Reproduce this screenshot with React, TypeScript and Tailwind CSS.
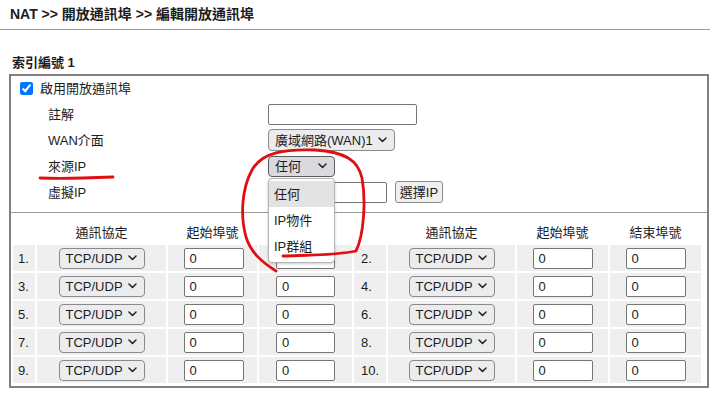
import React from 'react';

const Chevron: React.FC = () => (
  <svg width="9" height="6" viewBox="0 0 9 6" className="shrink-0">
    <path d="M1 1 L4.5 4.5 L8 1" fill="none" stroke="#222" strokeWidth="1.5" strokeLinecap="round" strokeLinejoin="round" />
  </svg>
);

interface SelectBoxProps {
  label: string;
  width: string;
  active?: boolean;
}

const SelectBox: React.FC<SelectBoxProps> = ({ label, width, active }) => (
  <div
    className={`${width} h-[21px] flex items-center justify-between pl-[6px] pr-[7px] rounded-[4px] border leading-[15px] ${
      active ? 'bg-[#d9d9de] border-[#5c5c5c]' : 'bg-[#ececef] border-[#8a8a8a]'
    }`}
  >
    <span className="whitespace-nowrap">{label}</span>
    <Chevron />
  </div>
);

const TextBox: React.FC<{ width: string; value?: string }> = ({ width, value }) => (
  <div className={`${width} h-[21px] bg-white border border-[#767676] rounded-[2px] pl-[5px] flex items-center leading-[15px]`}>
    {value}
  </div>
);

const PortRow: React.FC<{ left: number; right: number }> = ({ left, right }) => {
  const cell = 'bg-[#efefef] h-[26px] flex items-center';
  return (
    <>
      <div className={`${cell} pl-[5px]`}>{left}.</div>
      <div className={`${cell} justify-center`}><SelectBox label="TCP/UDP" width="w-[86px]" /></div>
      <div className={`${cell} justify-center pl-[2px]`}><TextBox width="w-[60px]" value="0" /></div>
      <div className={`${cell} justify-center`}><TextBox width="w-[59px]" value="0" /></div>
      <div className={`${cell} pl-[7px]`}>{right}.</div>
      <div className={`${cell} justify-center`}><SelectBox label="TCP/UDP" width="w-[86px]" /></div>
      <div className={`${cell} justify-center`}><TextBox width="w-[60px]" value="0" /></div>
      <div className={`${cell} justify-center`}><TextBox width="w-[60px]" value="0" /></div>
    </>
  );
};

const App: React.FC = () => {
  const rows = [
    [1, 2],
    [3, 4],
    [5, 6],
    [7, 8],
    [9, 10],
  ];
  const formLabel = 'w-[257px] pl-[37px] shrink-0';

  return (
    <div className="relative w-[721px] h-[403px] overflow-hidden bg-white text-[13px] text-[#1c1c1c] font-['Liberation_Sans','Noto_Sans_CJK_TC',sans-serif]">
      <div className="h-[30px] mr-[11px] border-b border-[#9a9a9a] pl-[10px] pt-[6px] font-bold text-[14px] leading-[16px]">
        NAT &gt;&gt; 開放通訊埠 &gt;&gt; 編輯開放通訊埠
      </div>

      <div className="h-[44px] flex items-end pb-[3px] pl-[12px] font-bold leading-[16px]">索引編號 1</div>

      <div className="ml-[9px] w-[700px] border-2 border-[#808080]">
        <div className="h-[25px] flex items-center pl-[9px] leading-[15px]">
          <input type="checkbox" defaultChecked className="m-0 w-[13px] h-[13px] accent-[#0075ff]" />
          <span className="ml-[7px]">啟用開放通訊埠</span>
        </div>

        <div className="h-[26px] flex items-center leading-[15px]">
          <div className={formLabel}>註解</div>
          <TextBox width="w-[149px]" />
        </div>
        <div className="h-[26px] flex items-center leading-[15px]">
          <div className={formLabel}>WAN介面</div>
          <div className="h-[22px] flex">
            <SelectBox label="廣域網路(WAN)1" width="w-[127px] h-[22px]" />
          </div>
        </div>
        <div className="h-[26px] flex items-center leading-[15px]">
          <div className={formLabel}>來源IP</div>
          <SelectBox label="任何" width="w-[67px]" active />
        </div>
        <div className="h-[26px] flex items-center leading-[15px]">
          <div className={formLabel}>虛擬IP</div>
          <TextBox width="w-[119px]" />
          <button
            type="button"
            className="ml-[8px] w-[48px] h-[22px] bg-[#efefef] border border-[#8a8a8a] rounded-[3px] leading-[15px] text-[13px]"
          >
            選擇IP
          </button>
        </div>

        <div className="mt-[7px] border-t border-[#9a9a9a]" />

        <div className="ml-[2px] pb-[3px] grid grid-cols-[22px_129px_89px_93px_32px_127px_91px_91px] gap-x-[2px] gap-y-[2px] leading-[15px]">
          <div className="h-[30px]" />
          <div className="h-[30px] flex items-end justify-center pb-[3px]">通訊協定</div>
          <div className="h-[30px] flex items-end justify-center pb-[3px]">起始埠號</div>
          <div className="h-[30px] flex items-end justify-center pb-[3px]">結束埠號</div>
          <div className="h-[30px]" />
          <div className="h-[30px] flex items-end justify-center pb-[3px]">通訊協定</div>
          <div className="h-[30px] flex items-end justify-center pb-[3px]">起始埠號</div>
          <div className="h-[30px] flex items-end justify-center pb-[3px]">結束埠號</div>
          {rows.map(([l, r]) => (
            <PortRow key={l} left={l} right={r} />
          ))}
        </div>
      </div>

      {/* open dropdown of 來源IP */}
      <div className="absolute left-[268px] top-[178px] w-[67px] pt-[2px] pb-[3px] bg-white border border-[#b5b5b5] rounded-[4px] shadow-[0_1px_3px_rgba(0,0,0,0.2)] leading-[15px]">
        <div className="h-[26px] flex items-center pl-[5px] bg-[#e3e3e3]">任何</div>
        <div className="h-[26px] flex items-center pl-[5px]">IP物件</div>
        <div className="h-[26px] flex items-center pl-[5px]">IP群組</div>
      </div>

      {/* red hand-drawn marks */}
      <svg className="absolute left-0 top-0 pointer-events-none" width="721" height="403" viewBox="0 0 721 403">
        <path
          d="M283 256 C310 255 340 255 356 251 C364 235 366 200 362 178 C358 160 345 152 315 150 C285 149 262 152 252 170 C242 188 240 215 246 237 C251 253 262 262 276 271"
          fill="none"
          stroke="#e01010"
          strokeWidth="2.8"
          strokeLinecap="round"
          strokeLinejoin="round"
        />
        <path d="M40 178 C60 179 90 178 113 177" fill="none" stroke="#e01010" strokeWidth="2.8" strokeLinecap="round" />
      </svg>
    </div>
  );
};

export default App;
